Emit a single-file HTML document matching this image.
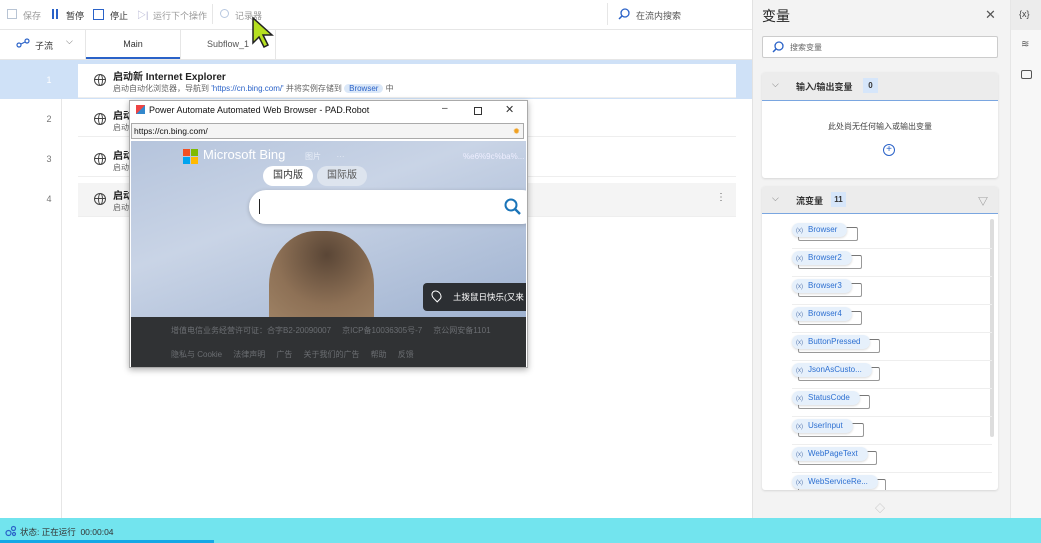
<!DOCTYPE html><html><head><meta charset="utf-8"><style>
*{box-sizing:border-box;margin:0;padding:0}
body{width:1041px;height:543px;overflow:hidden;position:relative;background:#fff;font-family:"Liberation Sans","Noto Sans CJK SC",sans-serif;color:#333}
.a{position:absolute}
.tb{font-size:9px;color:#999}
.num{position:absolute;left:0;width:98px;text-align:center;font-size:9px;color:#777}
.card{position:absolute;left:78px;width:658px;height:34px;background:#fff;border-bottom:1px solid #eee}
.glob{position:absolute;left:16px;top:10px;width:12px;height:12px;border:1.4px solid #444;border-radius:50%}
.glob:before{content:"";position:absolute;left:3px;top:-1px;width:3px;height:10px;border:1.2px solid #444;border-radius:50%}
.glob:after{content:"";position:absolute;left:-1px;top:4px;width:11px;height:1.2px;background:#444}
.t1{position:absolute;left:35px;top:4px;font-size:10px;font-weight:bold;color:#222}
.t2{position:absolute;left:35px;top:19px;font-size:8px;color:#666}
.var{position:absolute;left:30px;height:26px;border-bottom:1px solid #eee;width:200px}
.chip{position:absolute;left:0;top:0;height:14px;padding:0 10px 0 4px;border-radius:7px;background:#e6f0fb;box-shadow:0 1px 2px rgba(0,0,0,.15);font-size:8px;color:#2c6fd1;line-height:14px;white-space:nowrap}
.chip i{font-style:normal;font-size:6px;margin-right:5px;color:#5a7ab0}
.box{position:absolute;left:6px;top:4px;height:14px;border:1.3px solid #999;border-top-color:#777;border-radius:2px}
</style></head><body>
<div class="a" style="left:0;top:0;width:752px;height:30px;border-bottom:1px solid #e6e6e6"></div>
<div class="a" style="left:7px;top:9px;width:10px;height:10px;border:1px solid #b8c4d4"></div>
<div class="a tb" style="left:23px;top:9px">保存</div>
<div class="a" style="left:52px;top:9px;width:2px;height:10px;background:#2a62c8;box-shadow:4px 0 #2a62c8"></div>
<div class="a tb" style="left:66px;top:9px;color:#333">暂停</div>
<div class="a" style="left:93px;top:9px;width:11px;height:11px;border:1.5px solid #2a62c8"></div>
<div class="a tb" style="left:110px;top:9px;color:#333">停止</div>
<div class="a tb" style="left:137px;top:8px;color:#aac">▷|</div>
<div class="a tb" style="left:153px;top:9px">运行下个操作</div>
<div class="a" style="left:212px;top:4px;width:1px;height:20px;background:#e6e6e6"></div>
<div class="a" style="left:220px;top:9px;width:9px;height:9px;border:1px solid #b8c8e0;border-radius:50%"></div>
<div class="a tb" style="left:235px;top:9px">记录器</div>
<svg class="a" style="left:250px;top:16px" width="26" height="32"><path d="M3 2 L3 27 L9 21 L14 31 L18 29 L13 19 L22 19 Z" fill="#b6e020" stroke="#222" stroke-width="1.5"/></svg>
<div class="a" style="left:607px;top:3px;width:1px;height:22px;background:#e6e6e6"></div>
<svg class="a" style="left:618px;top:8px" width="12" height="12"><circle cx="7" cy="5" r="4" fill="none" stroke="#2a62c8" stroke-width="1.3"/><path d="M4 8 L1 11" stroke="#2a62c8" stroke-width="1.5"/></svg>
<div class="a tb" style="left:636px;top:9px;color:#555">在流内搜索</div>
<div class="a" style="left:0;top:30px;width:752px;height:30px;border-bottom:1px solid #e6e6e6"></div>
<svg class="a" style="left:16px;top:38px" width="14" height="10"><circle cx="3" cy="7" r="2" fill="none" stroke="#2a62c8" stroke-width="1.2"/><circle cx="11" cy="3" r="2" fill="none" stroke="#2a62c8" stroke-width="1.2"/><path d="M5 6 L9 4" stroke="#2a62c8" stroke-width="1.2"/></svg>
<div class="a" style="left:35px;top:39px;font-size:9px;color:#333">子流</div>
<div class="a" style="left:66px;top:36px;font-size:9px;color:#666">⌵</div>
<div class="a" style="left:85px;top:30px;width:1px;height:30px;background:#e6e6e6"></div>
<div class="a" style="left:86px;top:30px;width:94px;height:29px;border-bottom:2px solid #2a62c8;text-align:center;font-size:9px;line-height:29px">Main</div>
<div class="a" style="left:180px;top:30px;width:1px;height:30px;background:#e6e6e6"></div>
<div class="a" style="left:181px;top:30px;width:94px;height:29px;text-align:center;font-size:9px;line-height:29px;color:#555">Subflow_1</div>
<div class="a" style="left:275px;top:30px;width:1px;height:30px;background:#e6e6e6"></div>
<div class="a" style="left:0;top:60px;width:752px;height:39px;background:#cfe1f7"></div>
<div class="a" style="left:0;top:99px;width:62px;height:419px;border-right:1px solid #e6e6e6"></div>
<div class="num" style="top:75px;width:98px;color:#fff">1</div>
<div class="num" style="top:114px">2</div><div class="num" style="top:154px">3</div><div class="num" style="top:194px">4</div>
<div class="card" style="top:64px"><div class="glob"></div><div class="t1">启动新 Internet Explorer</div><div class="t2">启动自动化浏览器，导航到 <span style="color:#2a62c8">'https://cn.bing.com/'</span> 并将实例存储到 <span style="background:#dbe8f8;color:#2a62c8;padding:0 5px;border-radius:6px">Browser</span> 中</div></div>
<div class="card" style="top:103px"><div class="glob"></div><div class="t1">启动</div><div class="t2">启动</div></div>
<div class="card" style="top:143px"><div class="glob"></div><div class="t1">启动</div><div class="t2">启动</div></div>
<div class="card" style="top:183px;background:#f4f4f4"><div class="glob"></div><div class="t1">启动</div><div class="t2">启动</div><div style="position:absolute;right:10px;top:9px;font-size:10px;color:#666">⋮</div></div>
<div class="a" style="left:129px;top:100px;width:399px;height:268px;background:#fff;border:1px solid #aaa;box-shadow:0 2px 6px rgba(0,0,0,.3)"></div>
<div class="a" style="left:136px;top:105px;width:9px;height:9px;background:linear-gradient(135deg,#e44 50%,#38c 50%)"></div>
<div class="a" style="left:149px;top:105px;font-size:9px;color:#111">Power Automate Automated Web Browser - PAD.Robot</div>
<div class="a" style="left:442px;top:103px;font-size:10px;color:#333">–</div>
<div class="a" style="left:474px;top:107px;width:8px;height:8px;border:1px solid #333"></div>
<div class="a" style="left:505px;top:103px;font-size:11px;color:#333">✕</div>
<div class="a" style="left:131px;top:123px;width:393px;height:16px;border:1px solid #aaa;background:#f4f4f4;font-size:8.5px;line-height:14px;padding-left:2px;color:#111">https://cn.bing.com/<span style="position:absolute;right:3px;color:#f0a020">✹</span></div>
<div class="a" style="left:131px;top:141px;width:395px;height:176px;background:linear-gradient(160deg,#b5c4dc 0%,#c9d4e6 40%,#9fb2d0 100%);overflow:hidden">
 <div class="a" style="left:138px;top:90px;width:105px;height:120px;border-radius:45% 45% 20% 20%;background:radial-gradient(circle at 55% 20%,#5a4636,#8e7156 45%,#a88d6e)"></div>
 <div class="a" style="left:52px;top:8px;width:7px;height:7px;background:#f25022;box-shadow:8px 0 #7fba00,0 8px #00a4ef,8px 8px #ffb900"></div>
 <div class="a" style="left:72px;top:6px;font-size:13px;color:#fff">Microsoft Bing</div>
 <div class="a" style="left:174px;top:10px;font-size:8px;color:#e8eef8">图片 &nbsp; &nbsp; &nbsp; ···</div>
 <div class="a" style="left:332px;top:11px;font-size:8px;color:#eef">%e6%9c%ba%...</div>
 <div class="a" style="left:132px;top:25px;width:50px;height:20px;border-radius:10px;background:#fff;font-size:10px;text-align:center;line-height:20px">国内版</div>
 <div class="a" style="left:186px;top:25px;width:50px;height:20px;border-radius:10px;background:#dde4ee;font-size:10px;text-align:center;line-height:20px;color:#555">国际版</div>
 <div class="a" style="left:118px;top:49px;width:290px;height:34px;border-radius:17px;background:#fff;box-shadow:0 1px 4px rgba(0,0,0,.2)"><div style="position:absolute;left:10px;top:9px;width:1px;height:15px;background:#222"></div>
 <svg style="position:absolute;left:255px;top:8px" width="18" height="18"><circle cx="7" cy="7" r="5.5" fill="none" stroke="#1a74b8" stroke-width="2"/><path d="M11 11 L16 16" stroke="#1a74b8" stroke-width="2.4"/></svg></div>
 <div class="a" style="left:292px;top:142px;width:110px;height:28px;border-radius:4px;background:#2c2f33;font-size:8.5px;color:#fff;line-height:28px;padding-left:30px">土拨鼠日快乐(又来</div>
 <div class="a" style="left:301px;top:149px;width:9px;height:11px;border:1.4px solid #fff;border-radius:50% 50% 50% 0;transform:rotate(-45deg)"></div>
</div>
<div class="a" style="left:131px;top:317px;width:395px;height:50px;background:#303234;font-size:8px;color:#6b6e72">
 <div class="a" style="left:40px;top:8px;white-space:nowrap">增值电信业务经营许可证：合字B2-20090007 &nbsp; &nbsp; 京ICP备10036305号-7 &nbsp; &nbsp; 京公网安备1101</div>
 <div class="a" style="left:40px;top:32px;white-space:nowrap">隐私与 Cookie &nbsp; &nbsp; 法律声明 &nbsp; &nbsp; 广告 &nbsp; &nbsp; 关于我们的广告 &nbsp; &nbsp; 帮助 &nbsp; &nbsp; 反馈</div>
</div>
<div class="a" style="left:752px;top:0;width:258px;height:518px;background:#f3f3f3;border-left:1px solid #e2e2e2"></div>
<div class="a" style="left:1010px;top:0;width:31px;height:518px;background:#f7f7f7;border-left:1px solid #e6e6e6"></div>
<div class="a" style="left:1011px;top:0;width:30px;height:30px;background:#ececec"></div>
<div class="a" style="left:1019px;top:9px;font-size:9px;color:#444">{x}</div>
<div class="a" style="left:1021px;top:39px;font-size:10px;color:#555">≋</div>
<div class="a" style="left:1021px;top:70px;width:11px;height:9px;border:1.3px solid #555;border-radius:2px"></div>
<div class="a" style="left:762px;top:6px;font-size:14px;color:#222">变量</div>
<div class="a" style="left:985px;top:7px;font-size:13px;color:#555">✕</div>
<div class="a" style="left:762px;top:36px;width:236px;height:22px;background:#fff;border:1px solid #ccc;border-radius:2px"></div>
<svg class="a" style="left:772px;top:41px" width="12" height="12"><circle cx="7" cy="5" r="4" fill="none" stroke="#2a62c8" stroke-width="1.3"/><path d="M4 8 L1 11" stroke="#2a62c8" stroke-width="1.5"/></svg>
<div class="a" style="left:790px;top:42px;font-size:8px;color:#666">搜索变量</div>
<div class="a" style="left:762px;top:72px;width:236px;height:106px;background:#fff;border-radius:3px;box-shadow:0 1px 2px rgba(0,0,0,.12)"></div>
<div class="a" style="left:762px;top:72px;width:236px;height:29px;background:#ececec;border-bottom:1.5px solid #7aa6e0;border-radius:3px 3px 0 0"></div>
<div class="a" style="left:772px;top:79px;font-size:9px;color:#777">⌵</div>
<div class="a" style="left:796px;top:80px;font-size:9px;font-weight:bold;color:#333">输入/输出变量</div>
<div class="a" style="left:863px;top:78px;width:15px;height:15px;background:#d6e6fa;font-size:8px;font-weight:bold;text-align:center;line-height:15px">0</div>
<div class="a" style="left:762px;top:121px;width:236px;text-align:center;font-size:8px;color:#444">此处尚无任何输入或输出变量</div>
<div class="a" style="left:883px;top:144px;width:12px;height:12px;border:1.2px solid #2a62c8;border-radius:50%;color:#2a62c8;font-size:10px;line-height:9px;text-align:center">+</div>
<div class="a" style="left:762px;top:186px;width:236px;height:304px;background:#fff;border-radius:3px;box-shadow:0 1px 2px rgba(0,0,0,.12);overflow:hidden">
<div class="a" style="left:0;top:0;width:236px;height:28px;background:#ececec;border-bottom:1.5px solid #7aa6e0"></div>
<div class="a" style="left:10px;top:7px;font-size:9px;color:#777">⌵</div>
<div class="a" style="left:34px;top:8px;font-size:9px;font-weight:bold;color:#333">流变量</div>
<div class="a" style="left:69px;top:6px;width:15px;height:15px;background:#d6e6fa;font-size:8px;font-weight:bold;text-align:center;line-height:15px">11</div>
<div class="a" style="left:216px;top:7px;font-size:10px;color:#888">▽</div>
<div class="a" style="left:228px;top:33px;width:4px;height:218px;background:#ddd;border-radius:2px"></div>
<div class="var" style="top:37px;left:30px"><div class="box" style="width:60px"></div><div class="chip"><i>(x)</i>Browser</div></div>
<div class="var" style="top:65px"><div class="box" style="width:64px"></div><div class="chip"><i>(x)</i>Browser2</div></div>
<div class="var" style="top:93px"><div class="box" style="width:64px"></div><div class="chip"><i>(x)</i>Browser3</div></div>
<div class="var" style="top:121px"><div class="box" style="width:64px"></div><div class="chip"><i>(x)</i>Browser4</div></div>
<div class="var" style="top:149px"><div class="box" style="width:82px"></div><div class="chip"><i>(x)</i>ButtonPressed</div></div>
<div class="var" style="top:177px"><div class="box" style="width:82px"></div><div class="chip"><i>(x)</i>JsonAsCusto...</div></div>
<div class="var" style="top:205px"><div class="box" style="width:72px"></div><div class="chip"><i>(x)</i>StatusCode</div></div>
<div class="var" style="top:233px"><div class="box" style="width:66px"></div><div class="chip"><i>(x)</i>UserInput</div></div>
<div class="var" style="top:261px"><div class="box" style="width:79px"></div><div class="chip"><i>(x)</i>WebPageText</div></div>
<div class="var" style="top:289px"><div class="box" style="width:88px"></div><div class="chip"><i>(x)</i>WebServiceRe...</div></div>
</div>
<div class="a" style="left:875px;top:500px;font-size:10px;color:#bbb">◇</div>
<div class="a" style="left:0;top:518px;width:1041px;height:25px;background:#72e4ee"></div>
<div class="a" style="left:0;top:540px;width:214px;height:3px;background:#14a8e6"></div>
<svg class="a" style="left:5px;top:525px" width="12" height="12"><circle cx="3.5" cy="8" r="2.5" fill="none" stroke="#2a62c8" stroke-width="1.2"/><circle cx="8.5" cy="3.5" r="2" fill="none" stroke="#2a62c8" stroke-width="1.2"/><circle cx="9" cy="9" r="1.5" fill="none" stroke="#2a62c8" stroke-width="1.2"/></svg>
<div class="a" style="left:20px;top:526px;font-size:8.5px;color:#333">状态: 正在运行 &nbsp;00:00:04</div>
</body></html>
